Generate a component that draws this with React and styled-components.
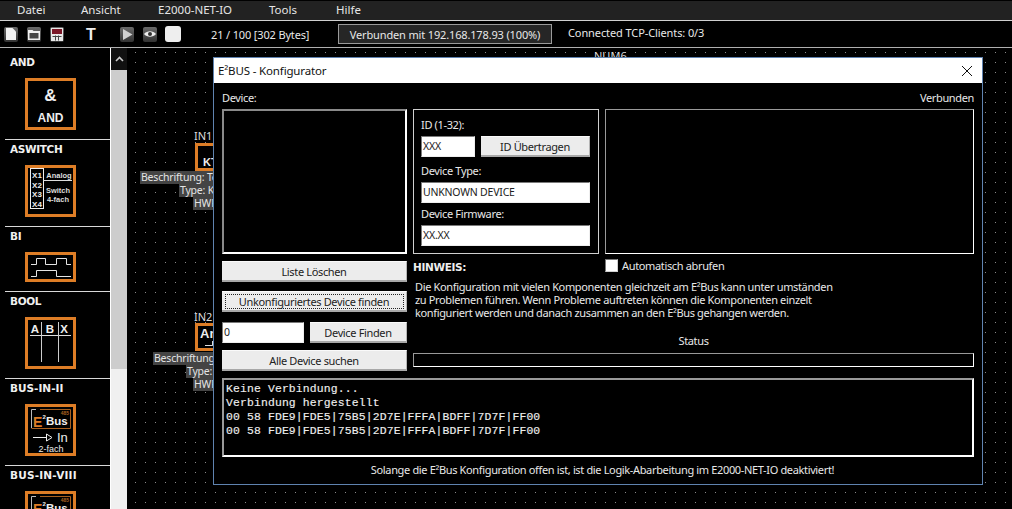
import React from "react";
import styled, { createGlobalStyle } from "styled-components";

const Global = createGlobalStyle`
  html, body { margin: 0; padding: 0; background: #000; }
  * { box-sizing: border-box; }
`;

const UI = `"Noto Sans", "DejaVu Sans", sans-serif`;

const Page = styled.div`
  width: 1012px; height: 509px; overflow: hidden;
  display: flex; flex-direction: column;
  background: #000; color: #e8e8e8;
  font: 11px/13px ${UI};
`;
const MenuBar = styled.nav`
  height: 21px; flex: none;
  display: grid; grid-template-columns: 64px 77px 111px 67px auto;
  align-items: center;
  padding: 0 0 2px 17px;
  background: #222;
  border-top: 1px solid #000;
  border-bottom: 1px solid #d0d0d0;
  font-size: 11.5px;
  color: #e6e6e6;
`;
const Toolbar = styled.div`
  height: 27px; flex: none;
  display: flex; align-items: center;
  padding-left: 4px;
  background: #000;
  border-bottom: 1px solid #b0b0b0;
`;
const ToolIcon = styled.span`
  flex: none; width: 14px; height: 15px;
  margin-left: ${p => p.$ml || 0}px;
  display: flex; align-items: center; justify-content: center;
  border-radius: 2px;
  background: linear-gradient(#6a6a6a, #333);
`;
const ToolT = styled.span`
  flex: none; width: 12px; margin-left: 21px; text-align: center;
  font: bold 16px/15px "Liberation Sans", sans-serif; color: #eee;
`;
const WhiteTool = styled.span`
  flex: none; width: 16px; height: 16px; margin-left: 8px;
  border-radius: 3px; background: #eeeeee;
`;
const Counter = styled.span`
  flex: none; margin-left: 30px; width: 127px; white-space: nowrap; letter-spacing: -0.15px;
`;
const ConnState = styled.span`
  flex: none; width: 214px; height: 20px;
  display: flex; align-items: center; justify-content: center;
  background: #262626; border: 1px solid #9a9a9a;
  white-space: nowrap; letter-spacing: -0.15px;
`;
const Clients = styled.span`
  flex: none; margin: -3px 0 0 16px; white-space: nowrap; letter-spacing: -0.1px;
`;
const Main = styled.div`
  flex: 1; min-height: 0; display: flex;
`;
const Palette = styled.aside`
  flex: none; width: 110px; padding-top: 4px; overflow: hidden; background: #000;
`;
const PaletteItem = styled.section`
  margin-left: 5px;
  padding-bottom: 9px;
  border-top: 1px solid ${p => (p.$first ? "transparent" : "#d8d8d8")};
`;
const PaletteName = styled.h4`
  margin: 0; height: 25px; padding: 3px 0 0 5px;
  font: bold 10.5px/13px "DejaVu Sans", sans-serif; color: #f0f0f0;
  letter-spacing: ${p => p.$ls ?? -0.35}px;
  white-space: nowrap;
`;
const PaletteIcon = styled.svg`
  display: block; margin-left: 20px; width: 51px; height: ${p => p.$h || 52}px;
  font-family: "Liberation Sans", sans-serif;
`;
const ScrollBar = styled.div`
  flex: none; width: 17px; display: flex; flex-direction: column;
  background: #f0f0f0;
  border-left: 1px solid #fff;
`;
const ScrollUp = styled.div`
  height: 22px; background: #111;
  display: flex; align-items: center; justify-content: center;
`;
const ScrollThumb = styled.div`
  height: 299px; background: #cdcdcd;
`;
const Canvas = styled.div`
  position: relative; flex: 1; overflow: hidden;
  background-color: #000;
  background-image: radial-gradient(circle at 0.5px 0.5px, #8a8a8a 0.75px, transparent 0.8px);
  background-size: 10px 10px;
  background-position: 8px 4px;
`;
const CanvasText = styled.span`
  position: absolute; left: ${p => p.$x}px; top: ${p => p.$y}px;
  white-space: nowrap; font-size: 11px; line-height: 13px; color: #ddd;
`;
const NodeBox = styled.div`
  position: absolute; left: ${p => p.$x}px; top: ${p => p.$y}px;
  width: 50px; height: 28px;
  padding: ${p => p.$pt}px 0 0 ${p => p.$pl}px;
  border: 3px solid #dd7d26; background: #000;
  font: bold ${p => p.$size}px/${p => p.$size + 1}px "Liberation Sans", sans-serif; color: #eee;
  white-space: nowrap;
`;
const NodeMark = styled.svg`
  display: block; margin-left: ${p => p.$ml || 0}px;
`;
const NodeInfo = styled.span`
  position: absolute; left: ${p => p.$x}px; top: ${p => p.$y}px;
  height: 13px; padding: 0 1px;
  background: #444; color: #e4e4e4;
  font-size: 10.5px; line-height: 13px; white-space: nowrap; letter-spacing: -0.2px;
`;
const Dialog = styled.div`
  position: absolute; left: 86px; top: 9px; width: 770px; height: 428px;
  display: flex; flex-direction: column;
  background: #000; border: 1px solid #5f83b0;
  letter-spacing: -0.35px;
`;
const TitleBar = styled.div`
  flex: none; height: 25px;
  display: flex; align-items: center; justify-content: space-between;
  padding: 0 9px 0 4px;
  background: #fff; color: #111; font-size: 11.5px; letter-spacing: -0.15px;
`;
const Body = styled.div`
  flex: 1; padding: 0 8px;
  display: flex; flex-direction: column;
`;
const Caption = styled.div`
  flex: none; height: 26px; padding-top: 8px;
  display: flex; justify-content: space-between;
`;
const Columns = styled.div`
  flex: none; display: grid; grid-template-columns: 185px 561px; column-gap: 6px;
`;
const LeftColumn = styled.div`display: flex; flex-direction: column;`;
const RightColumn = styled.div`display: flex; flex-direction: column;`;
const Panels = styled.div`
  display: grid; grid-template-columns: 186px 369px; column-gap: 6px;
`;
const Sunken = styled.div`
  height: 145px;
  border: 1px solid #fff; border-top-color: #9a9a9a; border-left-color: #9a9a9a;
  background: #000;
`;
const DevicePanel = styled(Sunken)`
  border-width: 2px; border-color: #8a8a8a #fff #fff #8a8a8a;
`;
const IdPanel = styled(Sunken)`
  padding: 8px 8px 0 7px;
  border-color: #d0d0d0;
  display: flex; flex-direction: column;
`;
const FieldLabel = styled.label`
  display: block; height: 13px; margin: ${p => p.$mt || 0}px 0 5px;
`;
const Field = styled.div`
  height: ${p => p.$h || 21}px;
  width: ${p => (p.$w ? p.$w + "px" : "100%")};
  flex: ${p => (p.$w ? "none" : "initial")};
  display: flex; align-items: center; padding-left: 1px;
  background: #fff; color: #222;
  border: 1px solid #eee; border-top-color: #7a7a7a; border-left-color: #7a7a7a;
  font-size: 10.5px; letter-spacing: -0.2px;
`;
const Inline = styled.div`
  display: flex; gap: 6px; margin-top: ${p => p.$mt || 0}px;
`;
const Btn = styled.div`
  position: relative;
  flex: ${p => (p.$grow ? 1 : "none")};
  height: 21px; margin-top: ${p => p.$mt || 0}px;
  display: flex; align-items: center; justify-content: center;
  background: #ececec; color: #222;
  border-bottom: 2px solid #a8a8a8; border-right: 1px solid #b4b4b4;
  border-top: 1px solid #fafafa;
  white-space: nowrap;
`;
const FocusRing = styled.span`
  position: absolute; inset: 2px 2px 1px 3px;
  border: 1px dotted #222;
`;
const HintHead = styled.div`
  height: 25px; margin-top: 5px;
  display: grid; grid-template-columns: 192px 1fr;
`;
const HintTitle = styled.strong`
  font: bold 10.5px/13px "DejaVu Sans", sans-serif; letter-spacing: -0.35px; padding-top: 2px; color: #eee;
`;
const AutoRow = styled.label`
  display: flex; align-items: flex-start; gap: 4px;
`;
const Check = styled.span`
  flex: none; width: 13px; height: 13px; background: #fff;
  border: 1px solid #d0d0d0; border-top-color: #777; border-left-color: #777;
`;
const Hint = styled.p`
  margin: -4px 0 0 2px; height: 46px; line-height: 13px;
`;
const StatusLabel = styled.div`
  text-align: center; margin: 8px 0 0; height: 13px;
`;
const StatusBar = styled.div`
  height: 14px; margin-top: 6px;
  border: 1px solid #fff; border-top-color: #999; border-left-color: #999;
`;
const Log = styled.pre`
  flex: none; height: 79px; margin: 7px 0 0; padding: 2px 0 0 2px;
  border: 2px solid #fff; border-top-color: #9a9a9a; border-left-color: #9a9a9a;
  font: 11.4px/14px "Liberation Mono", monospace; color: #eee;
  letter-spacing: 0.15px;
  -webkit-text-stroke: 0.15px #eee;
`;
const Footer = styled.div`
  text-align: center; margin-top: 6px; padding-left: 9px; white-space: nowrap;
`;

const orange = "#dd7d26";
const Frame = ({ h = 52 }) => (
  <rect x="1.5" y="1.5" width="48" height={h - 3} fill="#000" stroke={orange} strokeWidth="3" />
);

const AndIcon = () => (
  <PaletteIcon viewBox="0 0 51 52">
    <Frame />
    <text x="25.5" y="23" textAnchor="middle" fontSize="17" fontWeight="700" fill="#eee">&amp;</text>
    <text x="25.5" y="44" textAnchor="middle" fontSize="12" fontWeight="700" fill="#eee">AND</text>
  </PaletteIcon>
);
const SwitchIcon = () => (
  <PaletteIcon viewBox="0 0 51 52">
    <Frame />
    <rect x="5.5" y="3.5" width="13" height="40" fill="none" stroke="#eee" />
    <g fontSize="8" fontWeight="700" fill="#eee" textAnchor="middle">
      <text x="12" y="13">X1</text>
      <text x="12" y="22.5">X2</text>
      <text x="12" y="32">X3</text>
      <text x="12" y="41.5">X4</text>
    </g>
    <path d="M18 15.5H47" stroke="#ddd" />
    <g fontSize="7.5" fontWeight="700" fill="#ddd" textAnchor="middle">
      <text x="34" y="12.5">Analog</text>
      <text x="33" y="28">Switch</text>
      <text x="33" y="37">4-fach</text>
    </g>
  </PaletteIcon>
);
const WaveIcon = () => (
  <PaletteIcon $h={30} viewBox="0 0 51 30">
    <Frame h={30} />
    <path d="M6 12.5H11.5V6.5H20.5V12.5H31.5V6.5H41.5V12.5H46" fill="none" stroke="#e4e4e4" />
    <path d="M6 24.5H11.5V18.5H31.5V24.5H46" fill="none" stroke="#e4e4e4" />
  </PaletteIcon>
);
const BoolIcon = () => (
  <PaletteIcon viewBox="0 0 51 52">
    <Frame />
    <g fontSize="11.5" fontWeight="700" fill="#eee" textAnchor="middle">
      <text x="10" y="16">A</text>
      <text x="25" y="16">B</text>
      <text x="39" y="16">X</text>
    </g>
    <path d="M5 18.5H46" stroke="#ddd" />
    <path d="M16.5 5V45M33.5 5V45" stroke="#ccc" />
  </PaletteIcon>
);
const BusIcon = ({ label }) => (
  <PaletteIcon viewBox="0 0 51 52">
    <Frame />
    <path d="M11 5.5H6.5V24" fill="none" stroke="#bbb" />
    <path d="M6.5 24.5H45.5V5.5H15" fill="none" stroke="#a8601f" />
    <text x="8" y="23" fontSize="14" fontWeight="700" fill={orange}>E</text>
    <text x="17.5" y="15" fontSize="6" fontWeight="700" fill="#eee">2</text>
    <text x="21" y="20.5" fontSize="11.5" fontWeight="700" fill="#f0f0f0">Bus</text>
    <text x="44" y="11" textAnchor="end" fontSize="5" fontWeight="700" fill="#a8601f">485</text>
    <path d="M8 33.5H21" stroke="#eee" />
    <path d="M21.5 30L27 33.5L21.5 37Z" fill="none" stroke="#eee" />
    <text x="32" y="38" fontSize="13" fill="#eee">In</text>
    <text x="26" y="48" textAnchor="middle" fontSize="9" fill="#eee">{label}</text>
  </PaletteIcon>
);

const PageGlyph = () => (
  <svg width="10" height="12" viewBox="0 0 10 12"><path d="M0 0H6.5L10 3.5V12H0Z" fill="#f2f2f2" /></svg>
);
const FolderGlyph = () => (
  <svg width="12" height="11" viewBox="0 0 12 11">
    <path d="M0 1H4.5L5.5 2H12V11H0Z" fill="#eee" />
    <path d="M1.5 4H10.5V9.5H1.5Z" fill="#444" />
  </svg>
);
const SaveGlyph = () => (
  <svg width="12" height="13" viewBox="0 0 12 13">
    <path d="M0 0H12V13H0Z" fill="#e8e8e8" />
    <path d="M1 1H11V6H1Z" fill="#7a1626" />
    <path d="M1.5 8.5H10.5M4.5 7.5V12.5M7.5 7.5V12.5" stroke="#444" />
  </svg>
);
const PlayGlyph = () => (
  <svg width="11" height="11" viewBox="0 0 11 11"><path d="M1 0L10.5 5.5L1 11Z" fill="#cfcfcf" /></svg>
);
const EyeGlyph = () => (
  <svg width="12" height="8" viewBox="0 0 12 8">
    <path d="M0 4C3 .3 9 .3 12 4C9 7.7 3 7.7 0 4Z" fill="#eee" />
    <circle cx="6" cy="4" r="2" fill="#333" />
  </svg>
);

export default function App() {
  return (
    <Page>
      <Global />
      <MenuBar>
        <span>Datei</span>
        <span>Ansicht</span>
        <span>E2000-NET-IO</span>
        <span>Tools</span>
        <span>Hilfe</span>
      </MenuBar>
      <Toolbar>
        <ToolIcon><PageGlyph /></ToolIcon>
        <ToolIcon $ml={9}><FolderGlyph /></ToolIcon>
        <ToolIcon $ml={9}><SaveGlyph /></ToolIcon>
        <ToolT>T</ToolT>
        <ToolIcon $ml={23}><PlayGlyph /></ToolIcon>
        <ToolIcon $ml={9}><EyeGlyph /></ToolIcon>
        <WhiteTool />
        <Counter>21 / 100 [302 Bytes]</Counter>
        <ConnState>Verbunden mit 192.168.178.93 (100%)</ConnState>
        <Clients>Connected TCP-Clients: 0/3</Clients>
      </Toolbar>
      <Main>
        <Palette>
          <PaletteItem $first><PaletteName>AND</PaletteName><AndIcon /></PaletteItem>
          <PaletteItem><PaletteName>ASWITCH</PaletteName><SwitchIcon /></PaletteItem>
          <PaletteItem><PaletteName>BI</PaletteName><WaveIcon /></PaletteItem>
          <PaletteItem><PaletteName>BOOL</PaletteName><BoolIcon /></PaletteItem>
          <PaletteItem><PaletteName $ls={0}>BUS-IN-II</PaletteName><BusIcon label="2-fach" /></PaletteItem>
          <PaletteItem><PaletteName $ls={0.2}>BUS-IN-VIII</PaletteName><BusIcon label="8-fach" /></PaletteItem>
        </Palette>
        <ScrollBar>
          <ScrollUp>
            <svg width="9" height="6" viewBox="0 0 9 6"><path d="M1 5L4.5 1.5L8 5" fill="none" stroke="#ccc" strokeWidth="1.6" /></svg>
          </ScrollUp>
          <ScrollThumb />
        </ScrollBar>
        <Canvas>
          <CanvasText $x={467} $y={1}>NUM6</CanvasText>
          <CanvasText $x={67} $y={81}>IN1</CanvasText>
          <NodeBox $x={68} $y={95} $pt={10} $pl={5} $size={11}>KT</NodeBox>
          <NodeInfo $x={13} $y={123}>Beschriftung: Test</NodeInfo>
          <NodeInfo $x={52} $y={136}>Type: KTY</NodeInfo>
          <NodeInfo $x={66} $y={149}>HWP</NodeInfo>
          <CanvasText $x={67} $y={262}>IN2</CanvasText>
          <NodeBox $x={68} $y={275} $pt={1} $pl={2} $size={13}>
            An
            <NodeMark $ml={5} width="12" height="6" viewBox="0 0 12 6">
              <path d="M0 4.5H7.5V0M7.5 4.5H12" fill="none" stroke="#ddd" />
            </NodeMark>
          </NodeBox>
          <NodeInfo $x={26} $y={304}>Beschriftung: Test</NodeInfo>
          <NodeInfo $x={59} $y={317}>Type: AN</NodeInfo>
          <NodeInfo $x={66} $y={330}>HWP</NodeInfo>
          <Dialog>
            <TitleBar>
              <span>E²BUS - Konfigurator</span>
              <svg width="12" height="12" viewBox="0 0 12 12"><path d="M1 1L11 11M11 1L1 11" stroke="#111" strokeWidth="1" /></svg>
            </TitleBar>
            <Body>
              <Caption><span>Device:</span><span>Verbunden</span></Caption>
              <Columns>
                <LeftColumn>
                  <DevicePanel />
                  <Btn $mt={7}>Liste Löschen</Btn>
                  <Btn $mt={9}><FocusRing />Unkonfiguriertes Device finden</Btn>
                  <Inline $mt={10}>
                    <Field $w={82}>0</Field>
                    <Btn $grow>Device Finden</Btn>
                  </Inline>
                  <Btn $mt={7}>Alle Device suchen</Btn>
                </LeftColumn>
                <RightColumn>
                  <Panels>
                    <IdPanel>
                      <FieldLabel>ID (1-32):</FieldLabel>
                      <Inline>
                        <Field $w={54}>XXX</Field>
                        <Btn $grow>ID Übertragen</Btn>
                      </Inline>
                      <FieldLabel $mt={7}>Device Type:</FieldLabel>
                      <Field>UNKNOWN DEVICE</Field>
                      <FieldLabel $mt={4}>Device Firmware:</FieldLabel>
                      <Field>XX.XX</Field>
                    </IdPanel>
                    <Sunken />
                  </Panels>
                  <HintHead>
                    <HintTitle>HINWEIS:</HintTitle>
                    <AutoRow><Check />Automatisch abrufen</AutoRow>
                  </HintHead>
                  <Hint>
                    Die Konfiguration mit vielen Komponenten gleichzeit am E²Bus kann unter umständen<br />
                    zu Problemen führen. Wenn Probleme auftreten können die Komponenten einzelt<br />
                    konfiguriert werden und danach zusammen an den E²Bus gehangen werden.
                  </Hint>
                  <StatusLabel>Status</StatusLabel>
                  <StatusBar />
                </RightColumn>
              </Columns>
              <Log>{`Keine Verbindung...
Verbindung hergestellt
00 58 FDE9|FDE5|75B5|2D7E|FFFA|BDFF|7D7F|FF00
00 58 FDE9|FDE5|75B5|2D7E|FFFA|BDFF|7D7F|FF00`}</Log>
              <Footer>Solange die E²Bus Konfiguration offen ist, ist die Logik-Abarbeitung im E2000-NET-IO deaktiviert!</Footer>
            </Body>
          </Dialog>
        </Canvas>
      </Main>
    </Page>
  );
}
